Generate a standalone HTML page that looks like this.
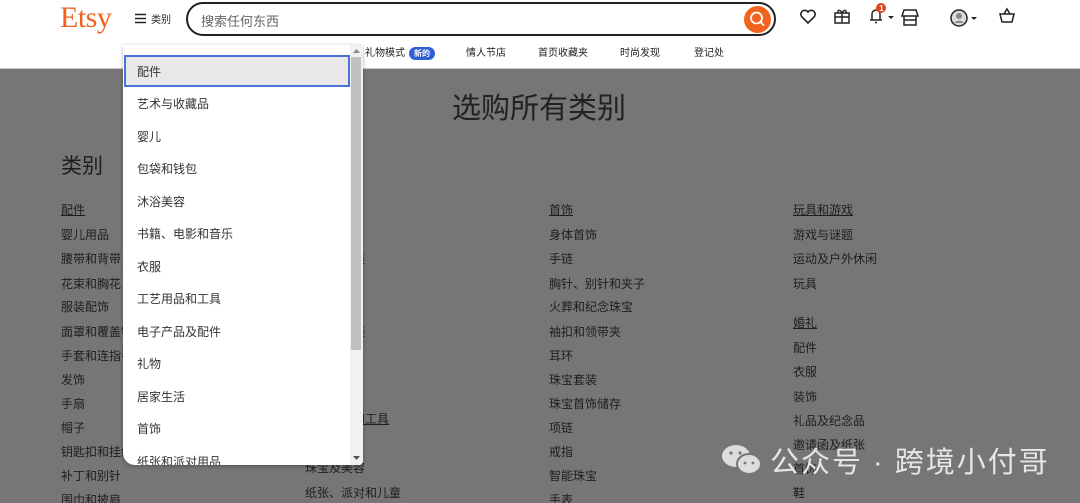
<!DOCTYPE html>
<html><head><meta charset="utf-8"><style>
*{margin:0;padding:0;box-sizing:border-box}
html,body{width:1080px;height:503px;overflow:hidden}
body{position:relative;background:#767676;font-family:"Liberation Sans","Noto Sans CJK SC",sans-serif;color:#222}
.hdr{position:absolute;left:0;top:0;width:1080px;height:69px;background:#fff;border-bottom:1px solid #ccc}
.logo{position:absolute;left:60px;top:1px;font-family:"Liberation Serif",serif;font-size:30px;color:#f1641e;letter-spacing:-0.5px}
.cat{position:absolute;top:12px;font-size:10px;color:#222}
.search{position:absolute;left:186px;top:2px;width:590px;height:34px;border:2px solid #222;border-radius:18px}
.search span{position:absolute;left:13px;top:7px;font-size:13px;color:#666}
.sbtn{position:absolute;right:3px;top:2px;width:27px;height:27px;border-radius:50%;background:#f1641e}
.nav{position:absolute;top:44px;font-size:10px;color:#222}
.badge{display:inline-block;background:#2f5fd0;color:#fff;border-radius:8px;font-size:8px;padding:1px 5px;margin-left:4px;font-weight:bold}
.t{position:absolute;font-size:12px;color:#1e1e1e;white-space:nowrap}
.u{text-decoration:underline}
.dd{position:absolute;left:123px;top:45px;width:240px;height:420px;background:#fff;border-radius:0 4px 4px 12px;box-shadow:0 1px 4px rgba(0,0,0,.3);overflow:hidden}
.dd .it{position:absolute;left:14px;font-size:12px;color:#333}
.sel{position:absolute;left:1px;top:10px;width:226px;height:32px;background:#e8e8e8;border:2px solid #4a72d6}
.sb{position:absolute;left:227px;top:0;width:13px;height:420px;background:#f1f1f1}
.th{position:absolute;left:228px;top:12px;width:10px;height:293px;background:#c1c1c1}
.ptr{position:absolute;left:143px;top:39px;width:0;height:0;border-left:7px solid transparent;border-right:7px solid transparent;border-bottom:7px solid #fff}
.wm{position:absolute;left:770px;top:439px;font-size:29px;color:#e6e6e6;letter-spacing:2px}
</style></head><body>
<div class="hdr">
<div class="logo">Etsy</div>
<svg style="position:absolute;left:134px;top:13px" width="14" height="11"><path d="M1 1.5H12M1 5.5H12M1 9.5H12" stroke="#222" stroke-width="1.5"/></svg>
<div class="cat" style="left:151px;top:11px">类别</div>
<div class="search"><span>搜索任何东西</span><div class="sbtn"><svg width="27" height="27"><circle cx="12.5" cy="12" r="5.5" fill="none" stroke="#fff" stroke-width="1.8"/><path d="M16.5 16L20 19.5" stroke="#fff" stroke-width="1.8"/></svg></div></div>
<svg style="position:absolute;left:798px;top:8px" width="20" height="18"><path d="M10 15L3.5 8.5A3.5 3.5 0 0 1 10 4A3.5 3.5 0 0 1 16.5 8.5Z" fill="none" stroke="#222" stroke-width="1.6"/></svg>
<svg style="position:absolute;left:833px;top:7px" width="18" height="18"><rect x="2" y="6" width="14" height="10" fill="none" stroke="#222" stroke-width="1.5"/><path d="M2 10H16M9 6V16M9 6C7 2 4 3 5 6M9 6C11 2 14 3 13 6" fill="none" stroke="#222" stroke-width="1.4"/></svg>
<svg style="position:absolute;left:866px;top:1px" width="32" height="25"><path d="M4 19H16M6 19V13A4 4 0 0 1 14 13V19M9 21.5H11" fill="none" stroke="#222" stroke-width="1.5"/><circle cx="15" cy="7" r="5" fill="#d8451b"/><text x="13.2" y="10" font-size="8" font-weight="bold" fill="#fff" font-family="Liberation Sans">1</text><path d="M22 15L28 15L25 18Z" fill="#222"/></svg>
<svg style="position:absolute;left:900px;top:8px" width="20" height="20"><path d="M2 8L4 2H16L18 8Z M4 8V17H16V8M4 12H16" fill="none" stroke="#222" stroke-width="1.5"/></svg>
<svg style="position:absolute;left:949px;top:7px" width="32" height="22"><circle cx="10" cy="11" r="8" fill="#ddd" stroke="#222" stroke-width="1.5"/><circle cx="10" cy="9" r="3" fill="#888"/><path d="M5 16A6 5 0 0 1 15 16" fill="#888"/><path d="M22 10L28 10L25 13Z" fill="#222"/></svg>
<svg style="position:absolute;left:998px;top:7px" width="18" height="18"><path d="M2 7H16L14 15H4Z M6 7L9 2L12 7" fill="none" stroke="#222" stroke-width="1.5"/></svg>
<div class="nav" style="left:365px">礼物模式<span class="badge">新的</span></div>
<div class="nav" style="left:466px">情人节店</div>
<div class="nav" style="left:538px">首页收藏夹</div>
<div class="nav" style="left:620px">时尚发现</div>
<div class="nav" style="left:694px">登记处</div>
</div>
<div class="t" style="left:452px;top:85px;font-size:29px;color:#222">选购所有类别</div>
<div class="t" style="left:61px;top:150px;font-size:21px">类别</div>
<div class="t u" style="left:61px;top:201px">配件</div>
<div class="t" style="left:61px;top:226px">婴儿用品</div>
<div class="t" style="left:61px;top:250px">腰带和背带</div>
<div class="t" style="left:61px;top:275px">花束和胸花</div>
<div class="t" style="left:61px;top:298px">服装配饰</div>
<div class="t" style="left:61px;top:323px">面罩和覆盖物</div>
<div class="t" style="left:61px;top:347px">手套和连指手套</div>
<div class="t" style="left:61px;top:371px">发饰</div>
<div class="t" style="left:61px;top:395px">手扇</div>
<div class="t" style="left:61px;top:419px">帽子</div>
<div class="t" style="left:61px;top:443px">钥匙扣和挂绳</div>
<div class="t" style="left:61px;top:467px">补丁和别针</div>
<div class="t" style="left:61px;top:491px">围巾和披肩</div>
<div class="t" style="left:305px;top:250px">服装与套装</div>
<div class="t" style="left:305px;top:323px">服装与套装</div>
<div class="t u" style="left:305px;top:410px">工艺用品和工具</div>
<div class="t" style="left:305px;top:459px">珠宝及美容</div>
<div class="t" style="left:305px;top:484px">纸张、派对和儿童</div>
<div class="t u" style="left:549px;top:201px">首饰</div>
<div class="t" style="left:549px;top:226px">身体首饰</div>
<div class="t" style="left:549px;top:250px">手链</div>
<div class="t" style="left:549px;top:275px">胸针、别针和夹子</div>
<div class="t" style="left:549px;top:298px">火葬和纪念珠宝</div>
<div class="t" style="left:549px;top:323px">袖扣和领带夹</div>
<div class="t" style="left:549px;top:347px">耳环</div>
<div class="t" style="left:549px;top:371px">珠宝套装</div>
<div class="t" style="left:549px;top:395px">珠宝首饰储存</div>
<div class="t" style="left:549px;top:419px">项链</div>
<div class="t" style="left:549px;top:443px">戒指</div>
<div class="t" style="left:549px;top:467px">智能珠宝</div>
<div class="t" style="left:549px;top:491px">手表</div>
<div class="t u" style="left:793px;top:201px">玩具和游戏</div>
<div class="t" style="left:793px;top:226px">游戏与谜题</div>
<div class="t" style="left:793px;top:250px">运动及户外休闲</div>
<div class="t" style="left:793px;top:275px">玩具</div>
<div class="t u" style="left:793px;top:314px">婚礼</div>
<div class="t" style="left:793px;top:339px">配件</div>
<div class="t" style="left:793px;top:363px">衣服</div>
<div class="t" style="left:793px;top:388px">装饰</div>
<div class="t" style="left:793px;top:412px">礼品及纪念品</div>
<div class="t" style="left:793px;top:436px">邀请函及纸张</div>
<div class="t" style="left:793px;top:460px">首饰</div>
<div class="t" style="left:793px;top:484px">鞋</div>
<div class="ptr"></div>
<div class="dd">
<div class="sel"></div>
<div class="it" style="top:18px">配件</div>
<div class="it" style="top:50px">艺术与收藏品</div>
<div class="it" style="top:83px">婴儿</div>
<div class="it" style="top:115px">包袋和钱包</div>
<div class="it" style="top:148px">沐浴美容</div>
<div class="it" style="top:180px">书籍、电影和音乐</div>
<div class="it" style="top:213px">衣服</div>
<div class="it" style="top:245px">工艺用品和工具</div>
<div class="it" style="top:278px">电子产品及配件</div>
<div class="it" style="top:310px">礼物</div>
<div class="it" style="top:343px">居家生活</div>
<div class="it" style="top:375px">首饰</div>
<div class="it" style="top:408px">纸张和派对用品</div>
<div class="sb"></div><div class="th"></div>
<svg style="position:absolute;left:229px;top:3px" width="9" height="6"><path d="M1 5H8L4.5 1Z" fill="#888"/></svg>
<svg style="position:absolute;left:229px;top:410px" width="9" height="6"><path d="M1 1H8L4.5 5Z" fill="#555"/></svg>
</div>
<svg style="position:absolute;left:720px;top:443px" width="44" height="34"><ellipse cx="16" cy="13" rx="14" ry="11" fill="#ddd"/><ellipse cx="29" cy="21" rx="12" ry="10" fill="#ddd" stroke="#767676" stroke-width="2"/><circle cx="11" cy="10" r="1.6" fill="#767676"/><circle cx="20" cy="10" r="1.6" fill="#767676"/><circle cx="25" cy="20" r="1.4" fill="#767676"/><circle cx="33" cy="20" r="1.4" fill="#767676"/></svg>
<div class="wm">公众号 · 跨境小付哥</div>
</body></html>
